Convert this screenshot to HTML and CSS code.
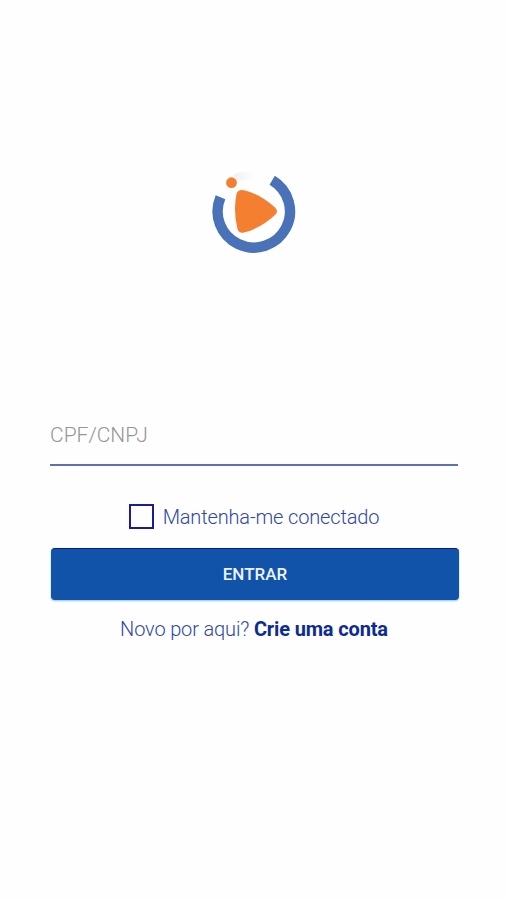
FILE: index.html
```
<!DOCTYPE html>
<html lang="pt-BR">
<head>
    <meta charset="UTF-8">
    <meta name="viewport" content="width=device-width, initial-scale=1.0">
    <title>Entrar</title>
    <link rel="stylesheet" href="styles.css">
</head>
<body>
    <main class="login">
        <svg class="logo" viewBox="0 0 110 100" width="110" height="100">
            <defs>
                <linearGradient id="fade">
                    <stop offset="0" stop-color="#f0f0f0"/>
                    <stop offset="1" stop-color="#fefefe"/>
                </linearGradient>
            </defs>
            <path d="M33 15 Q42 9 55 15 L52 21 Q45 18 37 21 Z" fill="url(#fade)"/>
            <path d="M20.5 37.2 A36.2 36.2 0 1 0 72.2 20.2" fill="none" stroke="#4a72b8" stroke-width="10.4"/>
            <circle cx="31.5" cy="22.7" r="5.4" fill="#f47f30"/>
            <path d="M36.5 34 Q38 29 44 30.2 Q60 34 75 47.5 Q79 51.5 75 55 Q61 68 44 72.6 Q39 73.6 37.5 69 Q33 51 36.5 34 Z" fill="#f47f30"/>
        </svg>
        <form class="form">
            <input class="campo" type="text" placeholder="CPF/CNPJ">
            <label class="manter">
                <input class="check" type="checkbox">
                <span>Mantenha-me conectado</span>
            </label>
            <button class="entrar" type="button">ENTRAR</button>
        </form>
        <p class="cadastro">Novo por aqui? <a class="criar" href="#">Crie uma conta</a></p>
    </main>
</body>
</html>
```
FILE: styles.css
```
body{
    margin: 0;
    background-color: #fefefe;
    font-family: Roboto, sans-serif;
}
.login{
    display: flex;
    flex-direction: column;
    align-items: center;
    box-sizing: border-box;
    height: 900px;
    padding: 160px 47px 0 51px;
}
.logo{
    display: block;
}
.form{
    display: flex;
    flex-direction: column;
    align-items: center;
    width: 100%;
    margin-top: 151px;
}
.campo{
    box-sizing: border-box;
    width: 408px;
    height: 55px;
    margin-left: -2px;
    padding: 0 0 6px;
    border: 0;
    border-bottom: 2px solid #5f6fb4;
    background: none;
    outline: none;
    font-family: inherit;
    font-size: 21px;
    font-weight: 300;
    color: #1a3f9c;
}
.campo::placeholder{
    color: #959595;
    opacity: 1;
}
.manter{
    display: flex;
    align-items: center;
    gap: 9px;
    margin-top: 38px;
    margin-right: 2px;
    font-size: 20px;
    font-weight: 300;
    line-height: 26px;
    letter-spacing: -0.15px;
    color: #2f48a4;
}
.check{
    appearance: none;
    box-sizing: border-box;
    width: 25px;
    height: 25px;
    margin: 0 0 1px;
    border: 2px solid #1c1c94;
}
.entrar{
    width: 408px;
    height: 52px;
    margin-top: 18px;
    padding: 0 0 1px;
    border: 0;
    border-top: 1px solid #0c1c8c;
    border-radius: 4px;
    background-color: #1053a8;
    box-shadow: 0 1px 2px #8fc6e6;
    font-family: inherit;
    font-size: 17px;
    font-weight: 500;
    color: #eef2ff;
}
.cadastro{
    margin: 16px 2px 0 0;
    font-size: 20px;
    font-weight: 300;
    line-height: 26px;
    letter-spacing: -0.15px;
    color: #2f48a4;
}
.criar{
    font-weight: 700;
    color: #0c2b93;
    text-decoration: none;
}
```
